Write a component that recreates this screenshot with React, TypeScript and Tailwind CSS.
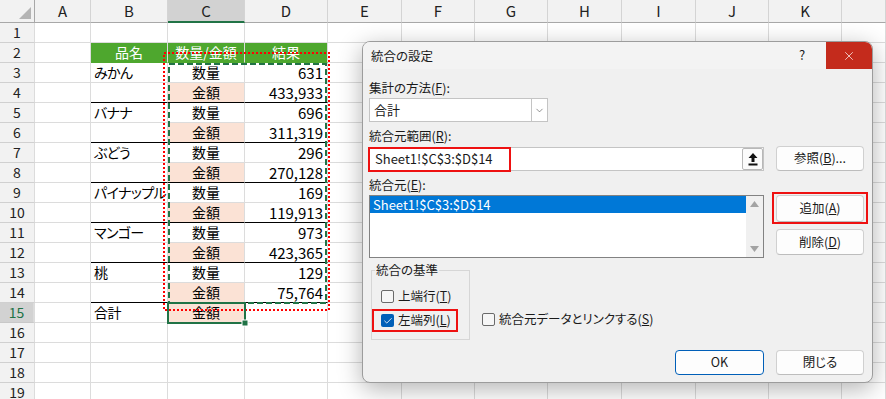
import { X, ChevronDown, Check } from 'lucide-react';

type Row = { b?: string; c?: string; d?: string; pink?: boolean; line?: boolean };

const letters = ['A', 'B', 'C', 'D', 'E', 'F', 'G', 'H', 'I', 'J', 'K', ''];

const data: Record<number, Row> = {
  3: { b: 'みかん', c: '数量', d: '631' },
  4: { c: '金額', d: '433,933', pink: true, line: true },
  5: { b: 'バナナ', c: '数量', d: '696' },
  6: { c: '金額', d: '311,319', pink: true, line: true },
  7: { b: 'ぶどう', c: '数量', d: '296' },
  8: { c: '金額', d: '270,128', pink: true, line: true },
  9: { b: 'パイナップル', c: '数量', d: '169' },
  10: { c: '金額', d: '119,913', pink: true, line: true },
  11: { b: 'マンゴー', c: '数量', d: '973' },
  12: { c: '金額', d: '423,365', pink: true, line: true },
  13: { b: '桃', c: '数量', d: '129' },
  14: { c: '金額', d: '75,764', pink: true, line: true },
  15: { b: '合計', c: '金額', pink: true },
};

const cell = 'h-[20px] border-r border-r-[#dcdcdc] leading-[19px] whitespace-nowrap overflow-hidden';

function SheetRow({ n }: { n: number }) {
  const r = data[n] ?? {};
  const bottom = r.line ? 'border-b border-b-black' : 'border-b border-b-[#dcdcdc]';
  const selected = n === 15;
  if (n === 2) {
    return (
      <>
        <div className={`${cell} border-b border-b-[#d0d0d0] bg-[#f2f2f2] text-center text-[14px] text-[#222] border-r-[#a8a8a8]`}>2</div>
        <div className={`${cell} border-b border-b-[#dcdcdc]`} />
        <div className={`${cell} border-b border-b-[#4ea72e] bg-[#4ea72e] border-r-[#4ea72e] text-center text-white text-[14px]`}>品名</div>
        <div className={`${cell} border-b border-b-[#4ea72e] bg-[#4ea72e] border-r-[#4ea72e] text-center text-white text-[14px]`}>数量/金額</div>
        <div className={`${cell} border-b border-b-[#4ea72e] bg-[#4ea72e] text-center text-white text-[14px]`}>結果</div>
        {letters.slice(4).map((l, i) => (
          <div key={i} className={`${cell} border-b border-b-[#dcdcdc]`} />
        ))}
      </>
    );
  }
  return (
    <>
      <div
        className={`${cell} border-b text-center text-[14px] ${
          selected
            ? 'bg-[#d2d2d2] text-[#217346] border-b-[#c8c8c8] border-r-2 border-r-[#217346]'
            : 'bg-[#f2f2f2] text-[#222] border-b-[#d0d0d0] border-r-[#a8a8a8]'
        }`}
      >
        {n}
      </div>
      <div className={`${cell} border-b border-b-[#dcdcdc]`} />
      <div className={`${cell} ${bottom} pl-[3px] text-[14px] tracking-[-0.6px]`}>{r.b}</div>
      <div className={`${cell} ${bottom} text-center text-[14px] ${r.pink ? 'bg-[#fbe2d5]' : ''}`}>{r.c}</div>
      <div className={`${cell} ${bottom} text-right pr-[4px] text-[15px]`}>{r.d}</div>
      {letters.slice(4).map((l, i) => (
        <div key={i} className={`${cell} border-b border-b-[#dcdcdc]`} />
      ))}
    </>
  );
}

function Box({ checked }: { checked?: boolean }) {
  return checked ? (
    <span className="w-[13px] h-[13px] rounded-[2px] bg-[#005fb8] flex items-center justify-center">
      <Check size={10} strokeWidth={2} color="white" />
    </span>
  ) : (
    <span className="w-[13px] h-[13px] rounded-[2px] border border-[#6a6a6a] bg-[#f6f6f6]" />
  );
}

function Btn({ children, primary, className = '' }: { children: React.ReactNode; primary?: boolean; className?: string }) {
  return (
    <div
      className={`w-[88px] flex items-center justify-center rounded-[4px] bg-[#fdfdfd] ${
        primary ? 'border border-[#005fb8]' : 'border border-[#d0d0d0] border-b-[#bdbdbd]'
      } ${className}`}
    >
      {children}
    </div>
  );
}

function Dialog() {
  return (
    <div className="absolute left-[362px] top-[41px] w-[511px] h-[342px] bg-[#f0f0f0] border border-[#9c9c9c] rounded-[8px] shadow-[0_6px_24px_rgba(0,0,0,0.3)] overflow-hidden text-[12.5px] text-[#1a1a1a]">
      <div className="flex h-[27px] bg-[#f3f3f3]">
        <div className="pl-[8px] pt-[6px] leading-[16px]">統合の設定</div>
        <div className="ml-auto w-[48px] text-center pt-[5px] text-[13px] leading-[16px]">?</div>
        <div className="w-[46px] h-[27px] bg-[#c42b1c] flex items-center justify-center">
          <X size={14} strokeWidth={1.2} color="white" />
        </div>
      </div>
      <div className="pl-[6px]">
        <div className="mt-[10px] h-[18px] leading-[18px]">
          集計の方法(<u>F</u>):
        </div>
        <div className="mt-[1px] w-[179px] h-[24px] flex bg-white border border-[#c4c4c4]">
          <div className="flex-1 pl-[4px] leading-[22px] text-[13px]">合計</div>
          <div className="w-[16px] border-l border-[#c4c4c4] flex items-center justify-center">
            <ChevronDown size={11} strokeWidth={1.4} color="#555" />
          </div>
        </div>
        <div className="mt-[5px] h-[18px] leading-[18px]">
          統合元範囲(<u>R</u>):
        </div>
        <div className="mt-[1px] flex gap-[12px]">
          <div className="mt-[1px] w-[395px] h-[24px] flex bg-white border border-[#c4c4c4] relative">
            <div className="absolute left-[-2px] top-[-1px] w-[143px] h-[25px] border-2 border-[#ee1111]" />
            <div className="flex-1 pl-[5px] leading-[22px] text-[13px]">Sheet1!$C$3:$D$14</div>
            <div className="w-[21px] h-[22px] border border-[#b8b8b8] rounded-[2px] bg-[#fbfbfb] flex items-center justify-center">
              <svg width="10" height="13" viewBox="0 0 10 13">
                <path d="M5 0 L9.5 5 L6.5 5 L6.5 9 L3.5 9 L3.5 5 L0.5 5 Z" fill="#111" />
                <rect x="0.5" y="10.5" width="9" height="2" fill="#111" />
              </svg>
            </div>
          </div>
          <Btn className="h-[25px]">
            参照(<u>B</u>)...
          </Btn>
        </div>
        <div className="mt-[5px] h-[18px] leading-[18px]">
          統合元(<u>E</u>):
        </div>
        <div className="mt-[1px] flex gap-[12px]">
          <div className="w-[395px] h-[63px] flex bg-white border border-[#828282]">
            <div className="flex-1">
              <div className="h-[17px] bg-[#0078d7] text-white pl-[3px] leading-[17px] text-[13px]">Sheet1!$C$3:$D$14</div>
            </div>
            <div className="w-[17px] bg-[#f0f0f0] flex flex-col items-center justify-between py-[5px]">
              <svg width="9" height="6" viewBox="0 0 9 6">
                <path d="M4.5 0 L9 6 L0 6 Z" fill="#a3a3a3" />
              </svg>
              <svg width="9" height="6" viewBox="0 0 9 6">
                <path d="M0 0 L9 0 L4.5 6 Z" fill="#a3a3a3" />
              </svg>
            </div>
          </div>
          <div className="flex flex-col gap-[7px]">
            <div className="relative">
              <div className="absolute left-[-4px] top-[-3px] w-[96px] h-[32px] border-2 border-[#ee1111]" />
              <Btn className="h-[27px]">
                追加(<u>A</u>)
              </Btn>
            </div>
            <Btn className="h-[26px]">
              削除(<u>D</u>)
            </Btn>
          </div>
        </div>
        <div className="mt-[12px] flex">
          <div className="ml-[2px] w-[99px] h-[70px] border border-[#d6d6d6] relative">
            <div className="absolute left-[3px] top-[-10px] px-[1px] bg-[#f0f0f0] leading-[18px]">統合の基準</div>
            <div className="mt-[16px] ml-[9px] h-[18px] flex items-center gap-[4px]">
              <Box />
              <span>
                上端行(<u>T</u>)
              </span>
            </div>
            <div className="mt-[4px] w-[86px] h-[23px] border-2 border-[#ee1111] flex items-center gap-[4px] pl-[7px]">
              <Box checked />
              <span>
                左端列(<u>L</u>)
              </span>
            </div>
          </div>
          <div className="ml-[12px] mt-[40px] h-[18px] flex items-center gap-[4px]">
            <Box />
            <span>
              統合元データとリンクする(<u>S</u>)
            </span>
          </div>
        </div>
        <div className="mt-[10px] flex justify-end gap-[12px] pr-[8px]">
          <Btn primary className="h-[25px] w-[89px]">
            OK
          </Btn>
          <Btn className="h-[25px]">閉じる</Btn>
        </div>
      </div>
    </div>
  );
}

export default function App() {
  const rows = Array.from({ length: 19 }, (_, i) => i + 1);
  return (
    <div className="relative w-[886px] h-[399px] overflow-hidden bg-white text-black font-[family-name:Noto_Sans_CJK_JP,sans-serif] [font-feature-settings:'palt']">
      <div className="grid grid-cols-[35px_56px_77px_77px_83px_74px_73px_73px_74px_74px_73px_73px_1fr]">
        {/* column headers */}
        <div className="h-[23px] bg-[#f2f2f2] border-r border-b border-[#a8a8a8] relative">
          <svg className="absolute right-[3px] bottom-[3px]" width="12" height="12" viewBox="0 0 12 12">
            <path d="M12 0 L12 12 L0 12 Z" fill="#b4b4b4" />
          </svg>
        </div>
        {letters.map((l, i) => (
          <div
            key={l + i}
            className={`h-[23px] border-r border-r-[#d4d4d4] text-center text-[15px] leading-[22px] ${
              l === 'C'
                ? 'bg-[#d2d2d2] border-b-2 border-b-[#217346] text-[#222]'
                : 'bg-[#f2f2f2] border-b border-b-[#a8a8a8] text-[#222]'
            }`}
          >
            {l}
          </div>
        ))}
        {rows.map((n) => (
          <SheetRow key={n} n={n} />
        ))}
      </div>

      {/* copy/reference marquee overlay */}
      <svg className="absolute left-0 top-0 pointer-events-none" width="886" height="399">
        <rect x="164" y="53" width="165" height="257" fill="none" stroke="#ff0000" strokeWidth="2" strokeDasharray="2 2" />
        <rect x="169" y="64" width="157" height="239" fill="none" stroke="#217346" strokeWidth="2" strokeDasharray="6 3" />
        <rect x="168" y="303" width="77" height="20" fill="none" stroke="#217346" strokeWidth="2" />
        <rect x="242" y="320" width="6" height="6" fill="#217346" stroke="white" strokeWidth="1" />
      </svg>

      <Dialog />
    </div>
  );
}
